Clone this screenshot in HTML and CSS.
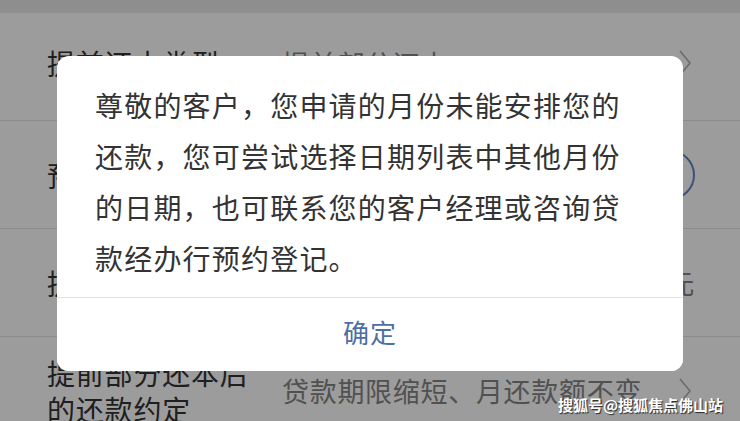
FILE: index.html
```html
<!DOCTYPE html>
<html lang="zh-CN">
<head>
    <meta charset="UTF-8">
    <meta name="viewport" content="width=device-width, initial-scale=1.0">
    <title>提前还款</title>
    <link rel="stylesheet" href="styles.css">
</head>
<body>

    <div class="screen">
        <div class="topbar"></div>
        <ul class="form-list">
            <li class="form-row">
                <span class="label">提前还本类型</span>
                <span class="value">提前部分还本</span>
                <svg class="chevron" viewBox="0 0 14 26"><polyline points="2,1 12,13 2,25"/></svg>
            </li>
            <li class="form-row">
                <span class="label">预约还款日期</span>
                <span class="value"></span>
                <span class="circle-btn"></span>
            </li>
            <li class="form-row">
                <span class="label">提前还本金额</span>
                <span class="value value-right">100,000.00元</span>
            </li>
            <li class="form-row">
                <span class="label label-wrap">提前部分还本后<br>的还款约定</span>
                <span class="value">贷款期限缩短、月还款额不变</span>
                <svg class="chevron" viewBox="0 0 14 26"><polyline points="2,1 12,13 2,25"/></svg>
            </li>
        </ul>
    </div>

    <!-- alert on top of the form -->
    <div class="mask">
        <div class="dialog">
            <p class="dialog-msg">尊敬的客户，您申请的月份未能安排您的还款，您可尝试选择日期列表中其他月份的日期，也可联系您的客户经理或咨询贷款经办行预约登记。</p>
            <button class="dialog-btn">确定</button>
        </div>
    </div>

    <div class="watermark">搜狐号@搜狐焦点佛山站</div>

</body>
</html>
```

FILE: styles.css
```css
* {
    box-sizing: border-box;
}
body {
    margin: 0;
    width: 740px;
    height: 421px;
    overflow: hidden;
    position: relative;
    background: #fff;
    font-family: "Noto Sans CJK SC", "Noto Sans", sans-serif;
}
.topbar {
    height: 13px;
    background: #e8e8ea;
}
.form-list {
    list-style: none;
    margin: 0;
    padding: 0;
}
.form-row {
    display: grid;
    grid-template-columns: 235px 1fr auto;
    align-items: center;
    height: 108px;
    padding: 0 45px 0 47px;
    border-bottom: 1px solid #e4e4e4;
}
.form-row:first-child {
    padding-bottom: 7px;
}
.label {
    font-size: 28px;
    letter-spacing: 0.8px;
    color: #333;
    white-space: nowrap;
}
.label-wrap {
    line-height: 36px;
}
.value {
    font-size: 27px;
    letter-spacing: 0.7px;
    color: #858585;
    white-space: nowrap;
}
.value-right {
    text-align: right;
}
.chevron {
    width: 14px;
    height: 26px;
    margin-right: 3px;
    fill: none;
    stroke: #afafaf;
    stroke-width: 1.6;
}
.circle-btn {
    width: 50px;
    height: 50px;
    border: 2px solid #6685c5;
    border-radius: 50%;
}

.mask {
    position: absolute;
    inset: 0;
    padding-top: 5px;
    background: rgba(0, 0, 0, 0.39);
    display: flex;
    align-items: center;
    justify-content: center;
}
.dialog {
    width: 626px;
    background: #fff;
    border-radius: 12px;
    overflow: hidden;
}
.dialog-msg {
    margin: 0;
    padding: 24px 38px 13px 38px;
    font-size: 28px;
    line-height: 51px;
    letter-spacing: 1.2px;
    color: #333;
}
.dialog-btn {
    display: block;
    width: 100%;
    height: 74px;
    padding: 0 0 6px 0;
    border: none;
    border-top: 1px solid #e3e3e3;
    background: #fff;
    font-family: inherit;
    font-size: 26px;
    letter-spacing: 1px;
    color: #4b6fa6;
}

.watermark {
    position: absolute;
    right: 17px;
    bottom: 6px;
    font-size: 15px;
    font-weight: bold;
    color: #fff;
    text-shadow: 1px 1px 1px rgba(0, 0, 0, 0.75);
}
```
